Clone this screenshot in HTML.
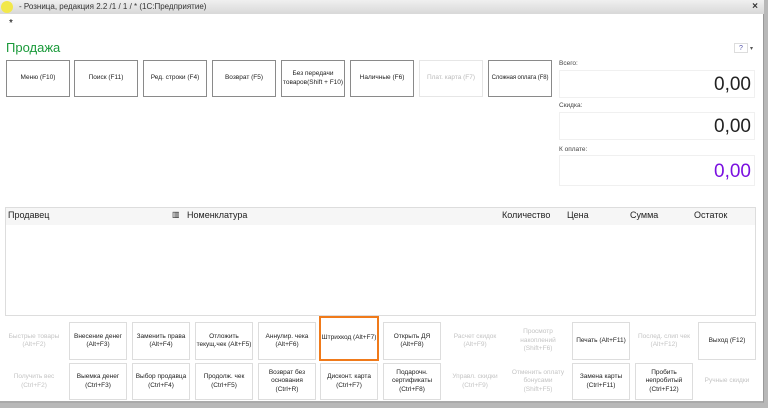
<!DOCTYPE html>
<html><head><meta charset="utf-8"><style>
*{box-sizing:border-box;margin:0;padding:0}
body{width:768px;height:408px;background:#b8b8b8;font-family:"Liberation Sans",sans-serif;position:relative;overflow:hidden}
.win{position:absolute;left:0;top:0;width:764px;height:403px;background:#fff;border-right:1px solid #999;border-bottom:2px solid #aaa}
.title{position:absolute;left:0;top:0;width:764px;height:14px;background:linear-gradient(#f0f0f0,#d8d8d8);font-size:8px;color:#333;line-height:14px;padding-left:19px}
.logo{position:absolute;left:1px;top:1px;width:12px;height:12px;border-radius:50%;background:#f2e84a}
.x{position:absolute;right:6px;top:0;font-size:10px;font-weight:bold}
.b{position:absolute;border:1px solid #8a8a8a;background:#fff;font-size:6.5px;color:#222;display:flex;align-items:center;justify-content:center;text-align:center;line-height:1.3}
.s{border-color:#ddd}
.d{color:#bbb;border-color:#e6e6e6}
.n{border:none;color:#c4c4c4}
.lbl{position:absolute;font-size:6.5px;color:#444}
.val{position:absolute;left:559px;width:196px;border:1px solid #f0f0f0;text-align:right;font-size:19px;color:#222;padding-right:3px}
.th{position:absolute;top:210px;font-size:9px;color:#222}
</style></head><body>
<div class="win">
<div class="title"><div class="logo"></div>- Розница, редакция 2.2 /1 / 1 / *  (1С:Предприятие)<span class="x">×</span></div>
<div style="position:absolute;left:9px;top:18px;font-size:10px">*</div>
<div style="position:absolute;left:6px;top:40px;font-size:13px;color:#1a9a3a">Продажа</div>
<div style="position:absolute;left:734px;top:43px;width:14px;height:10px;border:1px solid #ddd;font-size:7px;color:#55a;text-align:center;line-height:9px">?</div>
<div style="position:absolute;left:750px;top:45px;font-size:6px;color:#555">▾</div>
<div class="b" style="left:6px;top:60px;width:64px;height:37px">Меню (F10)</div>
<div class="b" style="left:74px;top:60px;width:64px;height:37px">Поиск (F11)</div>
<div class="b" style="left:143px;top:60px;width:64px;height:37px">Ред. строки (F4)</div>
<div class="b" style="left:212px;top:60px;width:64px;height:37px">Возврат (F5)</div>
<div class="b" style="left:281px;top:60px;width:64px;height:37px">Без передачи товаров(Shift + F10)</div>
<div class="b" style="left:350px;top:60px;width:64px;height:37px">Наличные (F6)</div>
<div class="b d" style="left:419px;top:60px;width:64px;height:37px">Плат. карта (F7)</div>
<div class="b" style="left:488px;top:60px;width:64px;height:37px;white-space:nowrap;font-size:6px;letter-spacing:-0.1px">Сложная оплата (F8)</div>
<div class="lbl" style="left:559px;top:60px">Всего:</div>
<div class="val" style="top:70px;height:28px;line-height:28px">0,00</div>
<div class="lbl" style="left:559px;top:102px">Скидка:</div>
<div class="val" style="top:112px;height:28px;line-height:28px">0,00</div>
<div class="lbl" style="left:559px;top:146px">К оплате:</div>
<div class="val" style="top:155px;height:31px;line-height:31px;color:#7a10e0">0,00</div>
<div style="position:absolute;left:5px;top:207px;width:751px;height:109px;border:1px solid #ddd"></div>
<div style="position:absolute;left:6px;top:208px;width:749px;height:17px;background:#f6f6f6"></div>
<div class="th" style="left:8px">Продавец</div>
<div class="th" style="left:172px;font-size:8px">▥</div>
<div class="th" style="left:187px">Номенклатура</div>
<div class="th" style="left:502px">Количество</div>
<div class="th" style="left:567px">Цена</div>
<div class="th" style="left:630px">Сумма</div>
<div class="th" style="left:694px">Остаток</div>

<div class="b n" style="left:5px;top:322px;width:58px;height:38px">Быстрые товары (Alt+F2)</div>
<div class="b s" style="left:69px;top:322px;width:58px;height:38px">Внесение денег (Alt+F3)</div>
<div class="b s" style="left:132px;top:322px;width:58px;height:38px">Заменить права (Alt+F4)</div>
<div class="b s" style="left:195px;top:322px;width:58px;height:38px">Отложить текущ.чек (Alt+F5)</div>
<div class="b s" style="left:258px;top:322px;width:58px;height:38px">Аннулир. чека (Alt+F6)</div>
<div class="b" style="left:319px;top:316px;width:60px;height:45px;border:2px solid #f07a1a">Штрихкод (Alt+F7)</div>
<div class="b s" style="left:383px;top:322px;width:58px;height:38px">Открыть ДЯ (Alt+F8)</div>
<div class="b n" style="left:446px;top:322px;width:58px;height:38px">Расчет скидок (Alt+F9)</div>
<div class="b n" style="left:509px;top:322px;width:58px;height:38px">Просмотр накоплений (Shift+F6)</div>
<div class="b s" style="left:572px;top:322px;width:58px;height:38px">Печать (Alt+F11)</div>
<div class="b n" style="left:635px;top:322px;width:58px;height:38px">Послед. слип чек (Alt+F12)</div>
<div class="b s" style="left:698px;top:322px;width:58px;height:38px">Выход (F12)</div>

<div class="b n" style="left:5px;top:363px;width:58px;height:37px">Получить вес (Ctrl+F2)</div>
<div class="b s" style="left:69px;top:363px;width:58px;height:37px">Выемка денег (Ctrl+F3)</div>
<div class="b s" style="left:132px;top:363px;width:58px;height:37px">Выбор продавца (Ctrl+F4)</div>
<div class="b s" style="left:195px;top:363px;width:58px;height:37px">Продолж. чек (Ctrl+F5)</div>
<div class="b s" style="left:258px;top:363px;width:58px;height:37px">Возврат без основания (Ctrl+R)</div>
<div class="b s" style="left:320px;top:363px;width:58px;height:37px">Дисконт. карта (Ctrl+F7)</div>
<div class="b s" style="left:383px;top:363px;width:58px;height:37px">Подарочн. сертификаты (Ctrl+F8)</div>
<div class="b n" style="left:446px;top:363px;width:58px;height:37px">Управл. скидки (Ctrl+F9)</div>
<div class="b n" style="left:509px;top:363px;width:58px;height:37px">Отменить оплату бонусами (Shift+F5)</div>
<div class="b s" style="left:572px;top:363px;width:58px;height:37px">Замена карты (Ctrl+F11)</div>
<div class="b s" style="left:635px;top:363px;width:58px;height:37px">Пробить непробитый (Ctrl+F12)</div>
<div class="b n" style="left:698px;top:363px;width:58px;height:37px">Ручные скидки</div>
</div>
</body></html>
